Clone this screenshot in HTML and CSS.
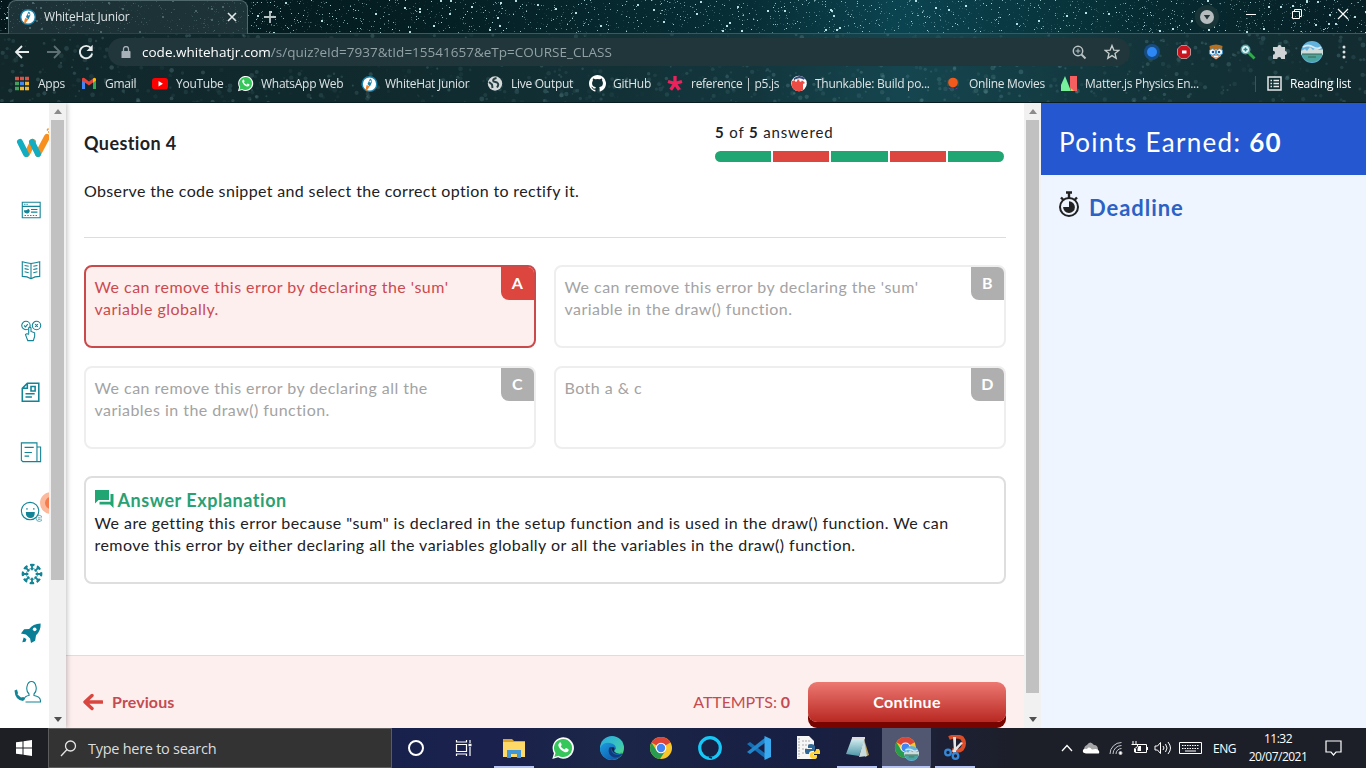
FILE: index.html
```html
<!DOCTYPE html>
<html lang="en">
<head>
<meta charset="utf-8">
<title>WhiteHat Junior</title>
<link rel="stylesheet" href="styles.css">
</head>
<body>
<svg class="defs" width="0" height="0">
  <defs>
    <linearGradient id="edgeA" x1="0" y1="0" x2="1" y2="1"><stop offset="0" stop-color="#2ba9e4"/><stop offset=".6" stop-color="#3ac7b8"/><stop offset="1" stop-color="#5fe05a"/></linearGradient>
    <linearGradient id="edgeB" x1="0" y1="0" x2="1" y2="1"><stop offset="0" stop-color="#1b9de2"/><stop offset="1" stop-color="#0d4b9e"/></linearGradient>
    <linearGradient id="note" x1="0" y1="0" x2="0" y2="1"><stop offset="0" stop-color="#d9f0f3"/><stop offset="1" stop-color="#4f98a8"/></linearGradient>
    <symbol id="wh" viewBox="0 0 16 16"><circle cx="8" cy="8" r="7.3" fill="#fff" stroke="#1b7fa5" stroke-width="1.4"/><path d="M6 8 8.6 2.6Q10.5 3.5 10.4 6L8.5 10.5z" fill="#1b7fa5"/><circle cx="8.8" cy="5.6" r="1" fill="#fff"/><path d="M5.2 9 8.3 10.3 5 15Q4 13.5 4.3 12z" fill="#f58220"/></symbol>
    <symbol id="wa" viewBox="0 0 18 18"><path d="M1 17.2 2.2 12.9A8 8 0 1 1 5.3 16z" fill="#fff"/><path d="M2.5 15.7 3.4 12.8A6.8 6.8 0 1 1 5.5 14.8z" fill="#35c75a"/><path d="M6.3 5q.8-.6 1.2.3l.5 1.2q0 .5-.7 1.1.9 1.900 2.800 2.600l.9-1q.4-.2.8 0l1.200.7q.6.4 0 1.300-.9 1.300-2.600.9Q6.800 11 5.500 7.400q-.2-1.500.8-2.400z" fill="#fff"/></symbol>
    <symbol id="chrome" viewBox="0 0 24 24"><circle cx="12" cy="12" r="11" fill="#f8c72c"/><path d="M12 12 2.500 6.500A11 11 0 0 1 21.500 6.500z" fill="#dc4537"/><path d="M2.500 6.500A11 11 0 0 0 11 23L16.500 14.500 12 12 7.500 14.500z" fill="#279b50"/><circle cx="12" cy="12" r="5.300" fill="#fff"/><circle cx="12" cy="12" r="4.200" fill="#4285f4"/></symbol>
    <symbol id="city" viewBox="0 0 22 22"><circle cx="11" cy="11" r="11" fill="#63b2de"/><path d="M2 6Q7 3 12 6T20 6" stroke="#d4e9f2" stroke-width="2" fill="none"/><path d="M0 10 4 8 6 10 9 6 12 9 15 7 18 9 22 8.500V14H0z" fill="#cfdcda"/><path d="M.4 13H21.600A11 11 0 0 1 .4 13z" fill="#4aa5a0"/><path d="M1 13H21M7 16H15" stroke="#3d6550"/></symbol>
  </defs>
</svg>

<header class="browser">
  <canvas class="sky" id="sky" width="1366" height="103"></canvas>
  <div class="tabs">
    <div class="tab">
      <svg width="16" height="16"><use href="#wh"/></svg><span class="tab-title">WhiteHat Junior</span>
      <svg width="10" height="10" viewBox="0 0 10 10"><path d="M1 1 9 9M9 1 1 9" stroke="#e3e8e9" stroke-width="1.600"/></svg>
    </div>
    <div class="newtab"><svg width="14" height="14" viewBox="0 0 14 14"><path d="M7 1V13M1 7H13" stroke="#b9c4c5" stroke-width="1.800"/></svg></div>
    <div class="window-controls">
      <svg width="24" height="24" viewBox="0 0 24 24"><circle cx="12" cy="12" r="12" fill="#183437"/><circle cx="12" cy="12" r="7" fill="#b5bdbe"/><path d="M8.800 10H15.200L12 14.500z" fill="#253638"/></svg>
      <svg width="10" height="20" viewBox="0 0 10 20"><path d="M0 9.500H10" stroke="#fff"/></svg>
      <svg width="11" height="20" viewBox="0 0 11 20"><path d="M.5 6.500H7.500V13.500H.5zM2.500 6V4.500H9.500V11.500H8" fill="none" stroke="#fff"/></svg>
      <svg width="12" height="20" viewBox="0 0 12 20"><path d="M1 4 11 14M11 4 1 14" stroke="#fff" stroke-width="1.200"/></svg>
    </div>
  </div>
  <div class="toolbar">
    <div class="nav">
      <svg width="16" height="16" viewBox="0 0 16 16"><path d="M15 8H2M8 2 2 8 8 14" fill="none" stroke="#e8ecec" stroke-width="1.800"/></svg>
      <svg width="16" height="16" viewBox="0 0 16 16"><path d="M1 8H14M8 2 14 8 8 14" fill="none" stroke="#5e7073" stroke-width="1.800"/></svg>
      <svg width="16" height="16" viewBox="0 0 16 16"><path d="M13 4.200A6.200 6.200 0 1 0 14.200 9.500" fill="none" stroke="#e8ecec" stroke-width="1.900"/><path d="M14.700.8V7H8.500z" fill="#e8ecec"/></svg>
    </div>
    <div class="address">
      <svg width="10" height="13" viewBox="0 0 10 13"><path d="M1 5H9Q9.500 5 9.500 6V12H.5V6Q.5 5 1 5z" fill="#a8b1b7"/><path d="M2.500 5.500V3A2.500 2.500 0 0 1 7.500 3V5.500" fill="none" stroke="#a8b1b7" stroke-width="1.300"/></svg>
      <span class="url"><b>code.whitehatjr.com</b>/s/quiz?eId=7937&amp;tId=15541657&amp;eTp=COURSE_CLASS</span>
      <svg width="15" height="15" viewBox="0 0 15 15" fill="none" stroke="#bac4c5"><circle cx="6" cy="6" r="4.700" stroke-width="1.500"/><path d="M9.500 9.500 13.500 13.500" stroke-width="2"/><path d="M6 3.600V8.400M3.600 6H8.400"/></svg>
      <svg width="16" height="16" viewBox="0 0 16 16"><path d="M8 1.500 9.800 6.100 14.800 6.400 11 9.500 12.200 14.300 8 11.600 3.800 14.300 5 9.500 1.200 6.400 6.200 6.100z" fill="none" stroke="#c7cecf" stroke-width="1.300"/></svg>
    </div>
    <div class="extensions">
      <svg width="16" height="16" viewBox="0 0 16 16"><circle cx="8" cy="8" r="8" fill="#174c83"/><circle cx="8" cy="8" r="5" fill="#2d87f5"/></svg>
      <svg width="16" height="16" viewBox="0 0 16 16"><path d="M5 1.500H11L14.500 5V11L11 14.500H5L1.500 11V5z" fill="#c9131e" stroke="#bd9090"/><rect x="6" y="6.500" width="4.500" height="3" fill="#fff"/></svg>
      <svg width="16" height="16" viewBox="0 0 16 16"><path d="M1.500 2Q8-1 14.500 2L14 6H2z" fill="#b8701e"/><path d="M3 5H13V12L8 15.500 3 12z" fill="#eba57b"/><circle cx="4.500" cy="8" r="3.200" fill="#fff" stroke="#3a8fc7"/><circle cx="11.500" cy="8" r="3.200" fill="#fff" stroke="#3a8fc7"/><circle cx="5" cy="8" r="1.300" fill="#135396"/><circle cx="11" cy="8" r="1.300" fill="#135396"/><path d="M6 12.500H10" stroke="#fff"/></svg>
      <svg width="16" height="16" viewBox="0 0 16 16"><path d="M8.500 8.500 14.500 14.500" stroke="#2bae42" stroke-width="2.800"/><circle cx="5.500" cy="5.500" r="4.200" fill="#e9fbfa" stroke="#58a5a7" stroke-width="1.500"/><path d="M3.500 5.500H7.500M5.500 3.500V7.500" stroke="#1d8792" stroke-width="1.500"/></svg>
      <svg width="16" height="16" viewBox="0 0 16 16"><path d="M5.500 3A2 2 0 0 1 9.500 3H13V7A2 2 0 0 1 13 11V15H9.200A2 2 0 0 0 5.200 15H1V10.800A2 2 0 0 0 1 6.800V3z" fill="#d0d4d5"/></svg>
      <svg width="22" height="22"><use href="#city"/></svg>
      <svg width="4" height="16" viewBox="0 0 4 16" fill="#dce1e1"><circle cx="2" cy="3" r="1.500"/><circle cx="2" cy="8" r="1.500"/><circle cx="2" cy="13" r="1.500"/></svg>
    </div>
  </div>
  <nav class="bookmarks">
    <span class="bm"><svg width="17" height="17" viewBox="0 0 17 17"><path d="M1 3.500H5M6 3.500H10M11 3.500H15" stroke="#dd5144" stroke-width="3.500"/><path d="M1 8.500H5M1 13.500H5" stroke="#45a05d" stroke-width="3.500"/><path d="M6 8.500H10" stroke="#4688f1" stroke-width="3.500"/><path d="M6 13.500H10M11 8.500H15M11 13.500H15" stroke="#f1b72c" stroke-width="3.500"/></svg>Apps</span>
    <span class="bm"><svg width="17" height="17" viewBox="0 0 17 17"><path d="M1 4H4V14H1z" fill="#4285f4"/><path d="M12 4H15V14H12z" fill="#34a853"/><path d="M1 3.500Q2.500 2 4 3.500L8 6.500 12 3.500 12 7.500 8 10.500 1 5.500z" fill="#ea4335"/><path d="M12 3.500Q14 2 15 4V5.500L12 7.700z" fill="#fbbc04"/></svg>Gmail</span>
    <span class="bm"><svg width="17" height="17" viewBox="0 0 17 17"><rect y="3" width="16" height="11.500" rx="3" fill="#f00"/><path d="M6.500 6V11.500L11 8.750z" fill="#fff"/></svg>YouTube</span>
    <span class="bm"><svg width="17" height="17"><use href="#wa"/></svg>WhatsApp Web</span>
    <span class="bm"><svg width="17" height="16"><use href="#wh"/></svg>WhiteHat Junior</span>
    <span class="bm"><svg width="17" height="17" viewBox="0 0 17 17"><circle cx="8" cy="8.500" r="7.200" fill="#d5dadb"/><path d="M9.500 3Q5 4 6.500 6.500L10 7.500Q12.500 9 10 12.500M2 7 5 9.500 5.500 13" fill="none" stroke="#274044" stroke-width="2"/></svg>Live Output</span>
    <span class="bm"><svg width="17" height="17" viewBox="0 0 16 16"><path fill="#fff" d="M8 0C3.600 0 0 3.600 0 8c0 3.500 2.300 6.500 5.500 7.600.4.100.5-.2.500-.4V13.800C3.800 14.300 3.300 12.800 3.300 12.800c-.4-.9-.9-1.200-.9-1.200-.7-.5.100-.5.100-.5.800.1 1.200.8 1.200.8.700 1.200 1.900.9 2.300.7.100-.5.300-.9.500-1.100C4.700 11.300 2.900 10.600 2.900 7.600c0-.9.300-1.600.8-2.200-.1-.2-.4-1 .1-2.100 0 0 .7-.2 2.200.8a7.600 7.600 0 0 1 4 0c1.500-1 2.200-.8 2.200-.8.400 1.100.2 1.900.1 2.100.5.600.8 1.300.8 2.200 0 3.100-1.900 3.700-3.600 3.900.3.200.5.700.5 1.500v2.200c0 .2.100.5.500.4A8 8 0 0 0 8 0z"/></svg>GitHub</span>
    <span class="bm"><svg width="17" height="17" viewBox="0 0 17 17"><path d="M8 8.500V1M8 8.500 1 6.500M8 8.500 15 6.500M8 8.500 3.700 14.800M8 8.500 12.300 14.800" stroke="#ed225d" stroke-width="3.300"/></svg>reference | p5.js</span>
    <span class="bm"><svg width="17" height="17" viewBox="0 0 17 17"><circle cx="8" cy="8.500" r="7.800" fill="#fff"/><path d="M2 14Q0 10 1 6 8 3 12 6L14 8 12 9V15Q7 18 2 14z" fill="#ec4c43"/><path d="M3 4.500Q8 0 13.500 4" stroke="#334b75" stroke-width="2" fill="none"/><circle cx="5" cy="5.500" r="1.200" fill="#fff"/><circle cx="9.500" cy="5.500" r="1.200" fill="#fff"/></svg>Thunkable: Build po...</span>
    <span class="bm"><svg width="17" height="17" viewBox="0 0 17 17"><path d="M2 7Q2 3 8 3T14 7V11H2z" fill="#284f49"/><circle cx="8" cy="7.500" r="4.800" fill="#f15a1c"/><path d="M3.500 13 5.500 14M8 13.500V15M12.500 13 10.500 14" stroke="#693b8b"/></svg>Online Movies</span>
    <span class="bm"><svg width="17" height="17" viewBox="0 0 17 17"><path d="M9 1H16V16H12L9 12z" fill="#f55f5f"/><path d="M4 1 10 16H0V10z" fill="#76f09b"/><path d="M9 12 13 16H10z" fill="#f5b862"/></svg>Matter.js Physics En...</span>
    <span class="bm reading"><svg width="16" height="17" viewBox="0 0 16 17"><rect x="1" y="2" width="13" height="13" fill="none" stroke="#e5e8e8" stroke-width="1.500"/><path d="M3.500 5.500H5M6.500 5.500H12M3.500 8.500H5M6.500 8.500H12M3.500 11.500H5M6.500 11.500H12" stroke="#e5e8e8" stroke-width="1.500"/></svg>Reading list</span>
  </nav>
</header>

<main class="page">
  <aside class="sidebar">
    <svg class="brand" viewBox="0 0 33 34"><path d="M22 27 31 10" stroke="#f7901e" stroke-width="6" stroke-linecap="round"/><path d="M11 27 17 15" stroke="#f7901e" stroke-width="6" stroke-linecap="round"/><path d="M4 15 10 27M16 15 22 27" stroke="#12adc1" stroke-width="6" stroke-linecap="round"/><path d="M31 3.500 32.500 1.500M32 5H33" stroke="#f7901e" stroke-width="1.300"/></svg>
    <svg viewBox="0 0 24 24"><path d="M2.500 3.500H22V20.500H2.500zM2.500 8H22M4.500 5.800H6M7 5.800H8.500M12 11.500H19M12 14.300H19"/><path d="M5 18H20" stroke-dasharray="1.500 1.500"/><path d="M5 13A2.500 2 0 1 0 9 11.500L7 13z" fill="#138496"/></svg>
    <svg viewBox="0 0 24 24"><path d="M12 5Q7 4 2.500 3V19Q8 19 12 21.500 16 19 21.500 19V3Q17 4 12 5V21.500M5 7 9.500 8M5 10.500 9.500 11.500M5 14 9.500 15M19 7 14.500 8M19 10.500 14.500 11.500M19 14 14.500 15"/></svg>
    <svg viewBox="0 0 24 24"><circle cx="6.500" cy="6" r="4.600"/><circle cx="18" cy="6" r="4.600"/><path d="M4.500 6 6 7.500 8.500 4.500M16.500 4.500 19.500 7.500M19.500 4.500 16.500 7.500"/><path d="M9.500 15V8.500Q10.700 7 12 8.500V12.500L16 14V18L14.500 22.500H8.500L6 16Q7.500 14 9.500 16" fill="#fff"/></svg>
    <svg viewBox="0 0 24 24" class="bold"><path d="M8 2.500H20.500V22H2.500V8zM8 2.500V8H2.500M12 6H16.500V11H12zM6 14H16M6 17.500H13"/></svg>
    <svg viewBox="0 0 24 24"><path d="M1.500 2H18.500V22.500H3L1.500 21zM18.500 6.500H22.500V22.500H18.500M5 7H15M5 12.500H10M8 12.500H13M5 16.500H10"/></svg>
    <svg viewBox="0 0 24 24"><circle cx="11" cy="11" r="9.500"/><path d="M7 12.500H15.500Q15.500 18 11.200 18T7 12.500z" fill="#138496"/><path d="M7 8.500H8.200M14.500 8.500H15.700" stroke-width="2"/><circle cx="21" cy="19" r="3.300" fill="#fff" stroke-width=".7"/><path d="M19.500 18.300H22.500M19.500 20H22.500" stroke-width=".7"/></svg>
    <svg class="wheel" viewBox="0 0 24 24"><circle cx="12" cy="12" r="6" stroke-width="1"/><circle cx="12" cy="12" r="10" stroke-width="2.500" stroke-dasharray="4.850 3" stroke-dashoffset="2.400"/><path d="M12 1V8M12 16V23M1 12H8M16 12H23M4.500 4.500 9 9M15 15 19.500 19.500M19.500 4.500 15 9M9 15 4.500 19.500" stroke-width="2"/></svg>
    <svg viewBox="0 0 24 24"><path d="M22.500 1.500Q23 9 17.500 14.500L16.500 20.500 12 23 11 18 6.500 13.500 1 12.500 4.500 8 10 7.500Q14 2 22.500 1.500zM4 17 7 18.500 6 21.500 2.500 22z" fill="#087f96" stroke="none"/><circle cx="16" cy="8" r="2" fill="#fff" stroke="none"/></svg>
    <svg class="support" viewBox="0 0 28 24"><path d="M11 19Q12 16 16 15.500V14Q13 11 14 6.500 15 1.500 18.500 1.500T23 6.500Q24 11 21 14V15.500Q28 16.500 27.500 22H12.500" stroke-width="1.100"/><path d="M1.500 10.500 4 9.500 5 13 4.500 14.500 8 17.500 10.500 17 12 19 10 21Q2 20 1.500 10.500z" fill="#138496" stroke="none"/></svg>
    <span class="notify"></span>
  </aside>
  <div class="scrollbar left"><i class="up"></i><div class="thumb"></div><i class="down"></i></div>

  <section class="quiz">
    <div class="quiz-head">
      <h1>Question 4</h1>
      <div class="progress">
        <p><b>5</b> of <b>5</b> answered</p>
        <div class="bars"><i></i><i class="bad"></i><i></i><i class="bad"></i><i></i></div>
      </div>
    </div>
    <p class="prompt">Observe the code snippet and select the correct option to rectify it.</p>
    <div class="answers">
      <div class="answer chosen"><p>We can remove this error by declaring the 'sum'<br>variable globally.</p><b>A</b></div>
      <div class="answer"><p>We can remove this error by declaring the 'sum'<br>variable in the draw() function.</p><b>B</b></div>
      <div class="answer"><p>We can remove this error by declaring all the<br>variables in the draw() function.</p><b>C</b></div>
      <div class="answer"><p>Both a &amp; c</p><b>D</b></div>
    </div>
    <div class="explanation">
      <h2><svg width="20" height="20" viewBox="0 0 20 20" fill="#20a672"><path d="M0 1H14V11H3.500L0 14.500zM15.500 5H18.500V19L15 15.500H4.500V12.700H15.500z"/></svg><span>Answer Explanation</span></h2>
      <p>We are getting this error because "sum" is declared in the setup function and is used in the draw() function. We can<br>remove this error by either declaring all the variables globally or all the variables in the draw() function.</p>
    </div>
    <footer class="quiz-foot">
      <span class="previous"><svg width="20" height="18" viewBox="0 0 20 18"><path d="M19 9H2.500M9 2.500 2 9 9 15.500" fill="none" stroke="#d9463f" stroke-width="3.400" stroke-linecap="round" stroke-linejoin="round"/></svg><b>Previous</b></span>
      <span class="attempts">ATTEMPTS: <b>0</b></span>
      <button class="continue">Continue</button>
    </footer>
  </section>
  <div class="scrollbar right"><i class="up"></i><div class="thumb"></div><i class="down"></i></div>

  <aside class="points">
    <div class="earned">Points Earned: <b>60</b></div>
    <div class="deadline">
      <svg width="22" height="27" viewBox="0 0 22 27"><circle cx="11" cy="16" r="9" fill="none" stroke="#222" stroke-width="2"/><path d="M8 1.500H14M11 2V7M3 6.500 5.500 9M19 6.500 16.500 9" stroke="#222" stroke-width="2.400"/><path d="M11 10.200A5.900 5.900 0 1 1 5.100 16H11z" fill="#222"/></svg>
      <b>Deadline</b>
    </div>
  </aside>
</main>

<footer class="taskbar">
  <div class="start"><svg width="16" height="16" viewBox="0 0 16 16" fill="#fff"><path d="M0 2.300 6.500 1.400V7.500H0zM7.500 1.200 16 0V7.500H7.500zM0 8.500H6.500V14.600L0 13.700zM7.500 8.500H16V16L7.500 14.800z"/></svg></div>
  <div class="search"><svg width="17" height="17" viewBox="0 0 17 17" fill="none" stroke="#e5e5e5" stroke-width="1.300"><circle cx="10.500" cy="6" r="5"/><path d="M7 9.500 1 16"/></svg><span>Type here to search</span></div>
  <div class="apps">
    <div><svg width="24" height="24" viewBox="0 0 24 24"><circle cx="12" cy="12" r="7" fill="none" stroke="#fff" stroke-width="2"/></svg></div>
    <div><svg width="24" height="24" viewBox="0 0 24 24" fill="none" stroke="#fff" stroke-width="1.200"><path d="M3.500 8.500H13.500V15.500H3.500zM3.500 4V6H13.500V4M3.500 20V18H13.500V20M17 4V7M17 11V20"/><path d="M15.500 9H18.500" stroke-width="2.500"/></svg></div>
    <div class="open"><svg width="24" height="24" viewBox="0 0 24 24"><path d="M1 3H10L12 5H23V21H1z" fill="#dca52b"/><path d="M1 6H23V21H1z" fill="#ffd968"/><path d="M5 22V14H19V22H15V18H9V22z" fill="#4297d4"/></svg></div>
    <div><svg width="24" height="24"><use href="#wa"/></svg></div>
    <div><svg width="26" height="26" viewBox="0 0 26 26"><circle cx="13" cy="13" r="12" fill="url(#edgeA)"/><path d="M1 13Q4 7 11 8 17 9 17 14 15 14.500 15 16 18 20 24 18 20 25 13 25A12 12 0 0 1 1 13z" fill="url(#edgeB)"/><path d="M10 13Q8 20 15 22.500 20 23 23.500 19 16 21.500 13 17 12 14.500 13.500 12 11 11.500 10 13z" fill="#123b7d"/><path d="M13.500 12Q16 12 15.500 15 14 17 17 18 21 19 24 17 17 20 14 17 12 14 13.500 12z" fill="#19234c"/></svg></div>
    <div><svg width="24" height="24"><use href="#chrome"/></svg></div>
    <div><svg width="26" height="26" viewBox="0 0 26 26"><circle cx="13" cy="13" r="10.300" fill="none" stroke="#16c8f7" stroke-width="3.200"/><path d="M12 22 15 23" stroke="#172043" stroke-width="1.500"/></svg></div>
    <div><svg width="26" height="26" viewBox="0 0 26 26"><path d="M1 9 4 7 20 19V24z" fill="#166fb5"/><path d="M1 17 4 19 20 7V2z" fill="#2186cc"/><path d="M18.500 1 25 4V22L18.500 25z" fill="#3ba9ed"/></svg></div>
    <div><svg width="26" height="26" viewBox="0 0 26 26"><path d="M2 1H14L19 6V24H2z" fill="#f6f6f6"/><path d="M4 3V22M7 6H16M7 10H16M7 14H12M7 18H11" stroke="#aaa" stroke-dasharray="2 1"/><path d="M10 17V14H17V13H13V11Q13 9 16 9T20 11V14Q20 16 17 16 14 16 14 19H11z" fill="#306998"/><path d="M25 16V19H18V20H22V22Q22 24 19 24T15 22V19Q15 17 18 17 21 17 21 14H24z" fill="#ffd43b"/></svg></div>
    <div class="open"><svg width="26" height="26" viewBox="0 0 26 26"><path d="M20 4 25 20 21 22z" fill="#b89c55"/><path d="M8 3H21L15 21 2 19z" fill="url(#note)"/><path d="M20 4 23 21 15 22z" fill="#c9dcde"/><path d="M8 3H21" stroke="#ddd" stroke-width="2"/></svg></div>
    <div class="open active"><svg width="27" height="27" viewBox="0 0 27 27"><use href="#chrome" x="1" y="1" width="23" height="23"/><use href="#city" x="11" y="11" width="15" height="15"/></svg></div>
    <div class="open"><svg width="26" height="26" viewBox="0 0 26 26"><path d="M7 3Q14 0 20 3 24 8 20 14 17 17 10 15" fill="none" stroke="#d94d28" stroke-width="4"/><path d="M11 2H14V17H12zM19 7 21 8 12 18 10 16z" fill="#e5e5e5"/><circle cx="6" cy="17.500" r="2.800" fill="none" stroke="#3687d8" stroke-width="2.300"/><circle cx="13.500" cy="21" r="2.800" fill="none" stroke="#3687d8" stroke-width="2.300"/></svg></div>
  </div>
  <div class="tray">
    <svg width="12" height="20" viewBox="0 0 12 20"><path d="M1 13 6 7.500 11 13" fill="none" stroke="#fff" stroke-width="1.300"/></svg>
    <svg width="18" height="20" viewBox="0 0 18 20"><path d="M2 12Q2 8 5 7 8 2 12 7 16 7 16 12z" fill="#a5a5a8"/><path d="M4 15.500Q0 15 1 12 2 10 5 11 7 8 10 11.500 16 10 17 13T15 15.500z" fill="#fff"/></svg>
    <svg width="14" height="20" viewBox="0 0 14 20" fill="none" stroke="#c7c9cc"><path d="M1 16A11.500 11.500 0 0 1 12.500 4.500M4 16A8.500 8.500 0 0 1 12.500 7.500M7 16A5.500 5.500 0 0 1 12.500 10.500"/><circle cx="11.500" cy="15" r="1.500" fill="#fff"/></svg>
    <svg width="17" height="20" viewBox="0 0 17 20" fill="none" stroke="#fff"><path d="M6 6.500H15.500V14.500H4.500V11M16.500 9V12M2 3V6M5 3V6M.5 6.500H6.500V8Q6 10 3.500 10.500V14H5"/><path d="M7.500 8H10V13H6.500V11Z" fill="#fff" stroke="none"/></svg>
    <svg width="18" height="20" viewBox="0 0 18 20" fill="none" stroke="#fff"><path d="M1 8H3.500L6.500 4.500V15.500L3.500 12H1zM9 8Q11 10 9 12M11.500 6Q14.500 10 11.500 14M14 4Q19 10 14 16"/></svg>
    <svg width="23" height="20" viewBox="0 0 23 20" fill="none" stroke="#fff"><path d="M.5 4.500H22.500V15.500H.5zM6 13H17"/><path d="M3 7.500H20M3 10.500H20" stroke-dasharray="1.500 1"/></svg>
    <span class="lang">ENG</span>
    <span class="clock">11:32<br>20/07/2021</span>
    <svg width="17" height="18" viewBox="0 0 17 18" fill="none" stroke="#fff" stroke-width="1.200"><path d="M1 2H16V13H11L8.500 16 6 13H1z"/></svg>
  </div>
</footer>
<script src="sky.js"></script>
</body>
</html>
```
FILE: styles.css
```css
* { box-sizing: border-box; }
body { margin: 0; width: 1366px; height: 768px; overflow: hidden; display: flex; flex-direction: column; background: #fff; font-family: Lato, sans-serif; color: #202124; }
p, h1, h2 { margin: 0; }
svg { flex: none; display: block; }
.defs { position: absolute; }

/* browser chrome */
.browser { position: relative; height: 103px; flex: none; font-family: "Open Sans", sans-serif; font-size: 12px; color: #dde4e5; background: #07282d; letter-spacing: -.27px; }
.sky { position: absolute; inset: 0; }
.tabs { position: relative; height: 34px; display: flex; align-items: flex-start; }
.tab { width: 240px; height: 34px; margin-left: 8px; padding: 0 10px 2px 11px; display: flex; align-items: center; background: rgba(36,59,64,.75); border: 1px solid #50676b; border-bottom: 0; border-radius: 8px 8px 0 0; }
.tab-title { flex: 1; margin-left: 8px; letter-spacing: -.2px; }
.newtab { width: 28px; height: 28px; margin: 3px 0 0 8px; border-radius: 50%; display: grid; place-items: center; }
.window-controls { margin-left: auto; padding: 5px 17px 0 0; display: flex; align-items: flex-start; }
.window-controls svg:nth-child(2) { margin-left: 27px; }
.window-controls svg:nth-child(3) { margin-left: 36px; }
.window-controls svg:nth-child(4) { margin-left: 34px; }
.toolbar { position: relative; height: 36px; display: flex; align-items: center; }
.nav { width: 108px; padding-left: 14px; display: flex; gap: 16px; }
.address { width: 1022px; height: 28px; padding: 0 10px 0 13px; border-radius: 14px; display: flex; align-items: center; gap: 17px; background: #20363b; }
.url { flex: 1; margin-left: -6px; font-size: 13.5px; color: #91a1a4; letter-spacing: .01px; }
.url b { font-weight: 400; color: #fff; }
.extensions { display: flex; align-items: center; gap: 16px; margin-left: 14px; }
.extensions svg:nth-child(6) { margin-left: -3px; }
.extensions svg:nth-child(7) { margin-left: 3px; }
.bookmarks { position: relative; height: 27px; padding-left: 14px; display: grid; grid-template-columns: 67px 71px 85px 124px 126px 102px 78px 124px 154px 116px 194px 1fr; align-items: center; }
.bm { display: flex; align-items: center; gap: 7px; white-space: nowrap; }
.reading { height: 16px; padding-left: 11px; border-left: 1px solid #3a5458; color: #fff; }

/* page columns */
.page { height: 625px; flex: none; display: flex; }
.sidebar { position: relative; width: 49px; overflow: hidden; padding-top: 24px; display: grid; grid-template-rows: 52px 62px 58px 64px 57px 64px 56px 68px 50px 68px; }
.sidebar svg { width: 22px; height: 22px; margin-left: 20px; align-self: center; fill: none; stroke: #138496; stroke-width: 1.200; }
.sidebar .brand { width: 33px; height: 34px; margin-left: 16px; align-self: start; stroke: none; }
.sidebar .bold { stroke-width: 1.700; }
.sidebar .wheel { margin-left: 21px; }
.sidebar .support { width: 28px; height: 24px; margin-left: 13px; }
.notify { position: absolute; left: 40px; top: 389px; width: 22px; height: 22px; border-radius: 50%; background: #f57c4c; border: 5px solid #fcb99b; }
.scrollbar { width: 17px; padding: 6px 2px; display: flex; flex-direction: column; align-items: center; background: #f1f1f1; flex: none; }
.scrollbar.left { position: relative; clip-path: inset(0 -8px 0 0); box-shadow: 1px 0 5px rgba(0,0,0,.25); }
.thumb { width: 13px; height: 460px; margin-top: 6px; background: #c1c1c1; }
.right .thumb { height: 573px; }
.up, .down { width: 0; height: 0; border: 4px solid transparent; }
.up { border-top: 0; border-bottom: 5px solid #8b8b8b; }
.down { margin-top: auto; border-bottom: 0; border-top: 5px solid #505050; }

/* question */
.quiz { width: 958px; flex: none; display: flex; flex-direction: column; font-size: 16px; letter-spacing: .45px; }
.quiz-head { height: 68px; margin: 0 18px; padding: 18px 2px 0 0; display: flex; justify-content: space-between; }
h1 { font-size: 18px; line-height: 22px; padding-top: 11px; letter-spacing: .4px; }
.progress { width: 289px; }
.progress p { font-size: 15px; line-height: 22px; letter-spacing: .85px; }
.bars { margin-top: 8px; height: 11px; display: grid; grid-template-columns: repeat(5, 1fr); gap: 2px; border-radius: 6px; overflow: hidden; }
.bars i { background: #20a672; }
.bars .bad { background: #dc463e; }
.prompt { height: 67px; margin: 0 18px; padding-top: 9px; line-height: 22px; border-bottom: 1px solid #ddd; font-size: 16px; letter-spacing: .35px; }
.answers { margin: 27px 18px 27px; display: grid; grid-template-columns: 452px 452px; grid-auto-rows: 83px; gap: 18px; }
.answer { position: relative; border: 2px solid #eee; border-radius: 8px; padding: 9px 8.5px; line-height: 22px; color: #a3a3a3; letter-spacing: .46px; }
.answer b { position: absolute; right: 0; top: 0; width: 33px; height: 33px; line-height: 32px; text-align: center; color: #fff; background: #afafaf; border-radius: 0 6px 0 8px; }
.answer.chosen { color: #cb4a4e; background: #feefef; border-color: #ca494a; }
.answer.chosen b { background: #dc463e; }
.explanation { height: 108px; margin: 0 18px; padding: 11px 8.5px; border: 2px solid #dedede; border-radius: 8px; line-height: 22px; letter-spacing: .44px; }
h2 { display: flex; gap: 3px; line-height: 23px; font-size: 18px; color: #2ba173; letter-spacing: .53px; }
.quiz-foot { height: 73px; margin-top: auto; padding: 0 18px; display: flex; align-items: flex-start; background: #feefef; border-top: 1px solid #ddd; color: #c44b50; overflow: hidden; }
.previous { display: flex; align-items: center; gap: 9px; margin: 35px auto 0 -1px; line-height: 22px; letter-spacing: .1px; }
.attempts { margin: 35px 18px 0 0; line-height: 22px; letter-spacing: -.1px; }
.continue { width: 198px; height: 40px; margin-top: 26px; padding-bottom: 2px; border: 0; border-radius: 9px; background: linear-gradient(#ed7872, #b92822); box-shadow: 0 6px #780400; color: #fff; font: 700 16px Lato, sans-serif; letter-spacing: .3px; }

/* points */
.points { flex: 1; background: #eef5fe; }
.earned { height: 72px; padding: 5px 18px 0; line-height: 68px; background: #2558d0; color: #fff; font-size: 26px; letter-spacing: 1.3px; }
.deadline { padding: 16px 17px; display: flex; gap: 9px; color: #2b62c4; font-size: 22px; line-height: 34px; letter-spacing: .95px; }

/* taskbar */
.taskbar { height: 40px; flex: none; display: flex; background: linear-gradient(90deg, #1d1f25 0, #1d1f25 48px, #18214c 391px, #1a214c 500px, #1b2648 600px, #171f43 800px, #1d2035 940px, #1c1f28 1020px); color: #fff; font-family: "Open Sans", sans-serif; }
.start { width: 48px; display: grid; place-items: center; }
.search { width: 344px; display: flex; align-items: center; gap: 11px; padding-left: 11px; background: #333; border: 1px solid #5c5c5c; font-size: 14.500px; color: #ddd; letter-spacing: -.27px; }
.apps { width: 589px; margin-left: -1px; display: grid; grid-template-columns: repeat(12, 1fr); }
.apps div { display: grid; place-items: center; }
.apps .open { background: linear-gradient(#b6c4f5, #b6c4f5) 50% 100% / 40px 2px no-repeat; }
.apps .active { background: linear-gradient(#b6c4f5, #b6c4f5) 50% 100% / 48px 2px no-repeat, #515771; }
.tray { flex: 1; padding-left: 81px; display: flex; align-items: center; }
.tray svg:nth-child(2) { margin-left: 9px; }
.tray svg:nth-child(3) { margin-left: 9px; }
.tray svg:nth-child(4) { margin-left: 8px; }
.tray svg:nth-child(5) { margin-left: 6px; }
.tray svg:nth-child(6) { margin-left: 7px; }
.lang { margin-left: 11px; width: 27px; font-size: 12px; letter-spacing: -.5px; }
.clock { width: 74px; margin-left: 1px; text-align: center; font-size: 12px; line-height: 18px; letter-spacing: -.5px; }
.tray svg:last-child { margin-left: 10px; }
```
FILE: sky.js
```js
// Starfield behind the browser theme: sharp in the tab strip, soft below it.
const canvas = document.getElementById('sky');
const ctx = canvas.getContext('2d');
let seed = 7937;
const rand = () => (seed = (seed * 16807) % 2147483647) / 2147483647;

const base = ctx.createLinearGradient(0, 0, 1366, 0);
base.addColorStop(0, '#05191d');
base.addColorStop(.3, '#041e22');
base.addColorStop(.55, '#072e36');
base.addColorStop(.66, '#0b4450');
base.addColorStop(.85, '#062a30');
base.addColorStop(1, '#062026');
ctx.fillStyle = base;
ctx.fillRect(0, 0, 1366, 103);
for (let i = 0; i < 3800; i++) {
  const x = Math.floor(rand() * 1366), y = Math.floor(rand() * 33), a = rand();
  ctx.fillStyle = `rgba(190,232,236,${a * a * a})`;
  const s = a > .975 ? 2 : 1;
  ctx.fillRect(x, y, s, s);
}
ctx.fillStyle = 'rgba(50,75,80,.28)';
ctx.fillRect(0, 33, 1366, 70);
for (let i = 0; i < 1100; i++) {
  const x = rand() * 1366, y = 34 + rand() * 69, r = .8 + rand() * 1.700;
  ctx.fillStyle = `rgba(120,170,175,${rand() * .26})`;
  ctx.beginPath();
  ctx.arc(x, y, r, 0, Math.PI * 2);
  ctx.fill();
}
ctx.fillStyle = '#40585c';
ctx.fillRect(0, 33, 1366, 1);
ctx.fillStyle = '#071d21';
ctx.fillRect(0, 102, 1366, 1);
```
